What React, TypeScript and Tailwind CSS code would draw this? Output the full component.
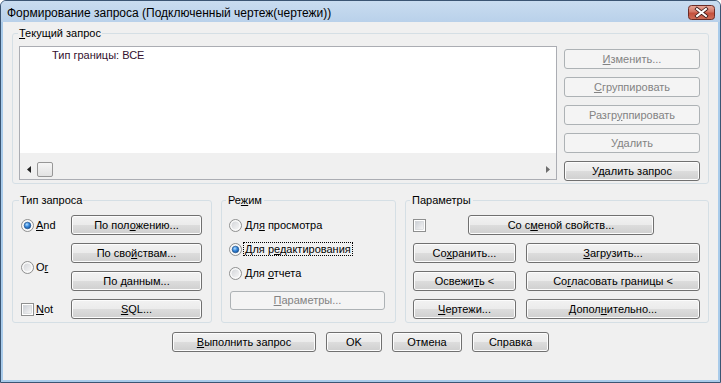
import React from "react";

const U = ({ children }: { children: React.ReactNode }) => (
  <span className="underline decoration-1 underline-offset-[1px]">{children}</span>
);

function Btn({
  className = "",
  disabled = false,
  children,
}: {
  className?: string;
  disabled?: boolean;
  children: React.ReactNode;
}) {
  return (
    <div
      className={`flex shrink-0 items-center justify-center rounded-[3px] border text-[11px] leading-[13px] whitespace-nowrap ${
        disabled
          ? "border-[#adb2b5] bg-[#f4f4f4] text-[#838383]"
          : "border-[#707070] bg-[linear-gradient(#f2f2f2_0%,#ebebeb_50%,#dddddd_50%,#cfcfcf_100%)] text-black shadow-[inset_0_0_0_1px_#fcfcfc]"
      } ${className}`}
    >
      <span>{children}</span>
    </div>
  );
}

function Radio({ checked = false }: { checked?: boolean }) {
  return (
    <svg width="13" height="13" viewBox="0 0 13 13" className="shrink-0">
      <defs>
        <linearGradient id="radBg" x1="0" y1="0" x2="1" y2="1">
          <stop offset="0%" stopColor="#d2d4d8" />
          <stop offset="100%" stopColor="#f8f8f8" />
        </linearGradient>
        <radialGradient id="radDot" cx="40%" cy="35%" r="70%">
          <stop offset="0%" stopColor="#b7e1ff" />
          <stop offset="45%" stopColor="#3f8ee0" />
          <stop offset="100%" stopColor="#0f4c94" />
        </radialGradient>
      </defs>
      <circle cx="6.5" cy="6.5" r="6" fill="#f4f4f4" stroke="#8e8f8f" strokeWidth="1" />
      <circle cx="6.5" cy="6.5" r="4.5" fill="url(#radBg)" stroke="#ffffff" strokeWidth="0.8" />
      {checked && <circle cx="6.5" cy="6.5" r="3.3" fill="url(#radDot)" stroke="#1b4f8a" strokeWidth="0.6" />}
    </svg>
  );
}

function Checkbox() {
  return (
    <svg width="13" height="13" viewBox="0 0 13 13" className="shrink-0">
      <defs>
        <linearGradient id="chkBg" x1="0" y1="0" x2="1" y2="1">
          <stop offset="0%" stopColor="#cbcfd5" />
          <stop offset="100%" stopColor="#f6f6f6" />
        </linearGradient>
      </defs>
      <rect x="0.5" y="0.5" width="12" height="12" fill="#ffffff" stroke="#8e8f8f" />
      <rect x="2.5" y="2.5" width="8" height="8" fill="url(#chkBg)" stroke="#c4c7cc" strokeWidth="0.5" />
    </svg>
  );
}

function CloseButton() {
  return (
    <svg width="27" height="15" viewBox="0 0 27 15" className="mr-[5px] mt-[4px] shrink-0">
      <defs>
        <linearGradient id="clsBg" x1="0" y1="0" x2="0" y2="1">
          <stop offset="0%" stopColor="#e9a99b" />
          <stop offset="45%" stopColor="#d47766" />
          <stop offset="55%" stopColor="#c4503d" />
          <stop offset="100%" stopColor="#d0705a" />
        </linearGradient>
      </defs>
      <rect x="0.5" y="0.5" width="26" height="14" rx="3" fill="url(#clsBg)" stroke="#6b2c27" />
      <path d="M9 4 L18 11 M18 4 L9 11" stroke="#3d1a18" strokeWidth="3.6" strokeLinecap="square" />
      <path d="M9 4 L18 11 M18 4 L9 11" stroke="#ffffff" strokeWidth="2" strokeLinecap="square" />
    </svg>
  );
}

export default function App() {
  return (
    <div className="flex h-[383px] w-[721px] flex-col overflow-hidden rounded-t-[6px] border border-[#3b5573] bg-[#a9cbea] font-['Liberation_Sans',Arial,sans-serif] text-[11px] text-black">
      {/* Title bar */}
      <div className="flex h-[21px] shrink-0 items-start justify-between bg-[linear-gradient(#c9dcf0,#b9d1ea)]">
        <div className="pl-[6px] pt-[5px] text-[12px] leading-[15px] text-black">
          Формирование запроса (Подключенный чертеж(чертежи))
        </div>
        <CloseButton />
      </div>

      {/* Client area */}
      <div className="mx-[2px] mb-[2px] flex flex-1 flex-col border-b border-[#f0f0f0] bg-[#f0f0f0] px-[9px] pt-[4px]">
        {/* Текущий запрос */}
        <fieldset className="h-[158px] w-[697px] shrink-0 rounded-[3px] border border-[#d5dfe5] pl-[6px] pt-[6px]">
          <legend className="ml-[-1px] px-[1px] leading-[14px]">
            <U>Т</U>екущий запрос
          </legend>
          <div className="flex">
            <div className="flex h-[134px] w-[538px] shrink-0 flex-col border border-[#abadb3] bg-white">
              <div className="h-[106px] shrink-0 pl-[32px] pt-[2px] leading-[13px] text-[#33102f]">
                Тип границы: ВСЕ
              </div>
              <div className="flex flex-1 items-end bg-[#f0f0f0] pb-[1px]">
                <div className="flex h-[17px] w-full items-center">
                  <div className="flex w-[17px] shrink-0 items-center justify-center">
                    <svg width="4" height="7" viewBox="0 0 4 7">
                      <path d="M4 0 L0 3.5 L4 7 Z" fill="#222" />
                    </svg>
                  </div>
                  <div className="h-[15px] w-[16px] shrink-0 rounded-[2px] border border-[#979797] bg-[linear-gradient(#f6f6f6,#e2e2e2)]" />
                  <div className="flex-1" />
                  <div className="flex w-[17px] shrink-0 items-center justify-center">
                    <svg width="4" height="7" viewBox="0 0 4 7">
                      <path d="M0 0 L4 3.5 L0 7 Z" fill="#6d6d6d" />
                    </svg>
                  </div>
                </div>
              </div>
            </div>
            <div className="ml-[7px] mt-[3px] flex flex-col gap-[8px]">
              <Btn disabled className="h-[20px] w-[136px]">
                <U>И</U>зменить...
              </Btn>
              <Btn disabled className="h-[20px] w-[136px]">
                <U>С</U>группировать
              </Btn>
              <Btn disabled className="h-[20px] w-[136px]">
                Разгр<U>у</U>ппировать
              </Btn>
              <Btn disabled className="h-[20px] w-[136px]">
                Удалить
              </Btn>
              <Btn className="h-[20px] w-[136px]">Удалить запрос</Btn>
            </div>
          </div>
        </fieldset>

        {/* Middle row */}
        <div className="mt-[9px] flex gap-[9px]">
          {/* Тип запроса */}
          <fieldset className="h-[130px] w-[200px] shrink-0 rounded-[3px] border border-[#d5dfe5] pl-[8px] pt-[8px]">
            <legend className="ml-[-2px] px-[1px] leading-[14px]">Тип запроса</legend>
            <div className="grid grid-cols-[50px_131px] grid-rows-[20px_20px_20px_20px] gap-y-[8px]">
              <div className="flex items-center gap-[2px]">
                <Radio checked />
                <span>
                  <U>A</U>nd
                </span>
              </div>
              <Btn className="h-[20px] w-[131px]">
                По пол<U>о</U>жению...
              </Btn>
              <div className="row-span-2 flex items-center gap-[2px]">
                <Radio />
                <span>
                  O<U>r</U>
                </span>
              </div>
              <Btn className="h-[20px] w-[131px]">
                По сво<U>й</U>ствам...
              </Btn>
              <Btn className="h-[20px] w-[131px]">
                По <U>д</U>анным...
              </Btn>
              <div className="flex items-center gap-[2px]">
                <Checkbox />
                <span>
                  <U>N</U>ot
                </span>
              </div>
              <Btn className="h-[20px] w-[131px]">
                <U>S</U>QL...
              </Btn>
            </div>
          </fieldset>

          {/* Режим */}
          <fieldset className="h-[130px] w-[175px] shrink-0 rounded-[3px] border border-[#d5dfe5] pl-[7px] pt-[8px]">
            <legend className="ml-[-3px] px-[2px] leading-[14px]">
              Ре<U>ж</U>им
            </legend>
            <div className="flex flex-col gap-[4px]">
              <div className="flex h-[20px] items-center gap-[1px]">
                <Radio />
                <span className="border border-transparent px-[1px] leading-[12px]">
                  Дл<U>я</U> просмотра
                </span>
              </div>
              <div className="flex h-[20px] items-center gap-[1px]">
                <Radio checked />
                <span className="border border-dotted border-black px-[1px] leading-[12px]">
                  Для р<U>е</U>дактирования
                </span>
              </div>
              <div className="flex h-[20px] items-center gap-[1px]">
                <Radio />
                <span className="border border-transparent px-[1px] leading-[12px]">
                  Для <U>о</U>тчета
                </span>
              </div>
            </div>
            <Btn disabled className="ml-[1px] mt-[8px] h-[19px] w-[155px]">
              <U>П</U>араметры...
            </Btn>
          </fieldset>

          {/* Параметры */}
          <fieldset className="h-[130px] w-[304px] shrink-0 rounded-[3px] border border-[#d5dfe5] pl-[7px] pt-[8px]">
            <legend className="ml-[-3px] px-[2px] leading-[14px]">Параметры</legend>
            <div className="flex flex-col gap-[8px]">
              <div className="flex h-[20px] items-center">
                <Checkbox />
                <Btn className="ml-[42px] h-[20px] w-[186px]">
                  Со с<U>м</U>еной свойств...
                </Btn>
              </div>
              <div className="flex gap-[10px]">
                <Btn className="h-[20px] w-[103px]">
                  Со<U>х</U>ранить...
                </Btn>
                <Btn className="h-[20px] w-[174px]">
                  <U>З</U>агрузить...
                </Btn>
              </div>
              <div className="flex gap-[10px]">
                <Btn className="h-[20px] w-[103px]">
                  Освежи<U>т</U>ь &lt;
                </Btn>
                <Btn className="h-[20px] w-[174px]">
                  Со<U>г</U>ласовать границы &lt;
                </Btn>
              </div>
              <div className="flex gap-[10px]">
                <Btn className="h-[20px] w-[103px]">
                  <U>Ч</U>ертежи...
                </Btn>
                <Btn className="h-[20px] w-[174px]">
                  Допол<U>н</U>ительно...
                </Btn>
              </div>
            </div>
          </fieldset>
        </div>

        {/* Bottom buttons */}
        <div className="mt-[9px] flex justify-center gap-[10px]">
          <Btn className="h-[20px] w-[144px]">
            <U>В</U>ыполнить запрос
          </Btn>
          <Btn className="h-[20px] w-[56px]">OK</Btn>
          <Btn className="h-[20px] w-[70px]">Отмена</Btn>
          <Btn className="h-[20px] w-[77px]">Справка</Btn>
        </div>
      </div>
    </div>
  );
}
